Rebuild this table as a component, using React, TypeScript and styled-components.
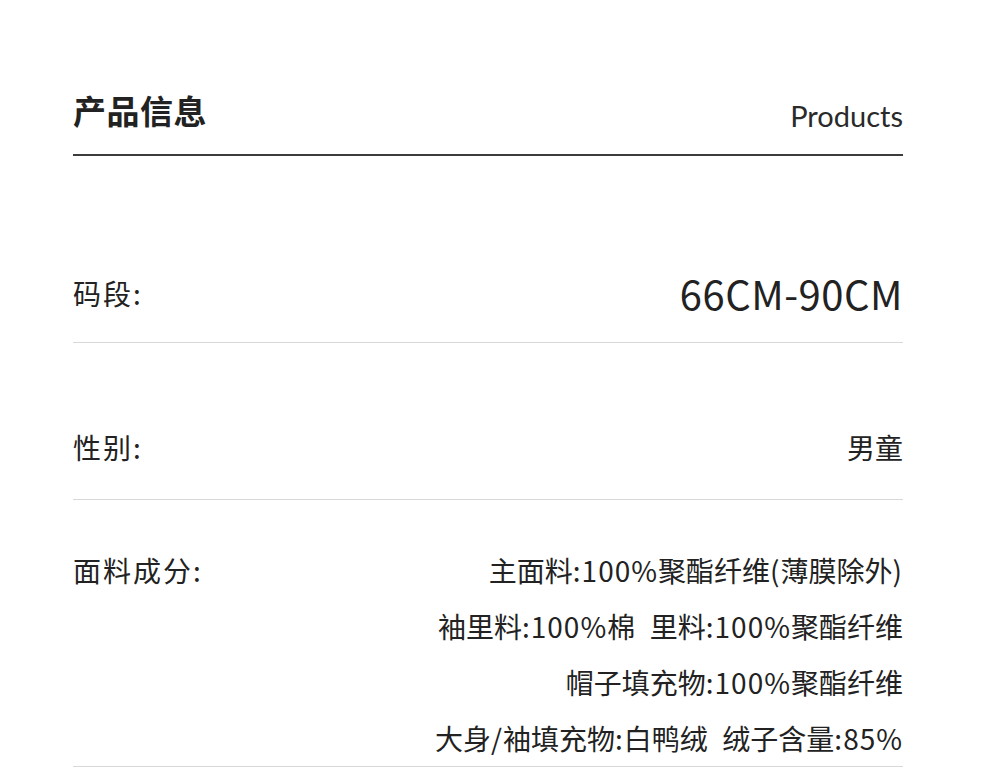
import React from "react";
import styled, { createGlobalStyle } from "styled-components";

const Global = createGlobalStyle`
  html, body { margin: 0; padding: 0; background: #fff; }
  body { font-family: "Noto Sans CJK SC", "Noto Sans", sans-serif; color: #222; }
`;

const Page = styled.div`
  width: 1000px;
  height: 767px;
  overflow: hidden;
  box-sizing: border-box;
  padding: 0 97px 0 73px;
`;

const Header = styled.header`
  display: flex;
  justify-content: space-between;
  align-items: flex-end;
  padding-top: 88px;
  padding-bottom: 22px;
  border-bottom: 2px solid #3c3c3c;
`;

const Title = styled.h1`
  margin: 0;
  font-size: 33px;
  font-weight: 700;
  line-height: 44px;
  letter-spacing: 0.5px;
`;

const English = styled.span`
  font-family: "Lato", "Noto Sans", sans-serif;
  font-size: 29px;
  line-height: 32px;
  color: #2a2a2a;
`;

const Row = styled.div<{ $top: number; $bottom: number }>`
  display: flex;
  justify-content: space-between;
  align-items: flex-start;
  padding-top: ${(p) => p.$top}px;
  padding-bottom: ${(p) => p.$bottom}px;
  border-bottom: 1px solid #d8d8d8;
`;

const Label = styled.div`
  font-size: 28px;
  line-height: 56px;
  letter-spacing: 2px;
  color: #222;
`;

const Value = styled.div<{ $big?: boolean }>`
  text-align: right;
  font-size: ${(p) => (p.$big ? 40 : 28)}px;
  letter-spacing: ${(p) => (p.$big ? 0.5 : 0)}px;
  line-height: 56px;
  color: #222;
  white-space: pre;
`;

const Line = styled.div`
  display: block;
`;

const Latin = styled.span`
  letter-spacing: 1px;
`;

const lines: string[][] = [
  ["主面料", ":100%", "聚酯纤维", "(", "薄膜除外", ")"],
  ["袖里料", ":100%", "棉", "  ", "里料", ":100%", "聚酯纤维"],
  ["帽子填充物", ":100%", "聚酯纤维"],
  ["大身", "/", "袖填充物", ":", "白鸭绒", "  ", "绒子含量", ":85%"],
];

const isLatin = (s: string) => /^[\x00-\x7f]+$/.test(s);

export default function App() {
  return (
    <>
      <Global />
      <Page>
        <Header>
          <Title>产品信息</Title>
          <English>Products</English>
        </Header>
        <Row $top={109} $bottom={21}>
          <Label>码段:</Label>
          <Value $big>66CM-90CM</Value>
        </Row>
        <Row $top={76} $bottom={24}>
          <Label>性别:</Label>
          <Value>男童</Value>
        </Row>
        <Row $top={42} $bottom={0}>
          <Label>面料成分:</Label>
          <Value>
            {lines.map((parts, i) => (
              <Line key={i}>
                {parts.map((p, j) =>
                  isLatin(p) ? <Latin key={j}>{p}</Latin> : <React.Fragment key={j}>{p}</React.Fragment>
                )}
              </Line>
            ))}
          </Value>
        </Row>
      </Page>
    </>
  );
}
